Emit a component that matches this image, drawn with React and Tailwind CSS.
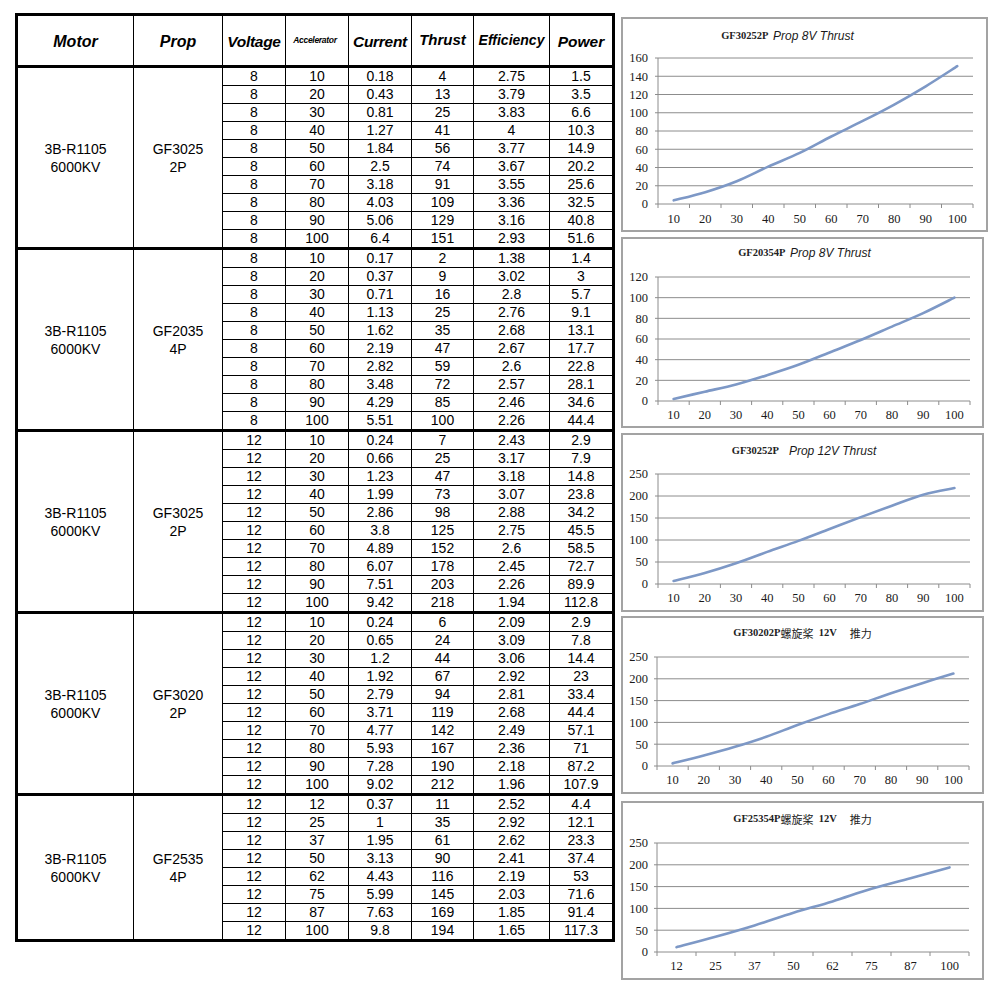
import React from "react";

const groups = [
  {
    motor: ["3B-R1105", "6000KV"],
    prop: ["GF3025", "2P"],
    rows: [
      ["8", "10", "0.18", "4", "2.75", "1.5"],
      ["8", "20", "0.43", "13", "3.79", "3.5"],
      ["8", "30", "0.81", "25", "3.83", "6.6"],
      ["8", "40", "1.27", "41", "4", "10.3"],
      ["8", "50", "1.84", "56", "3.77", "14.9"],
      ["8", "60", "2.5", "74", "3.67", "20.2"],
      ["8", "70", "3.18", "91", "3.55", "25.6"],
      ["8", "80", "4.03", "109", "3.36", "32.5"],
      ["8", "90", "5.06", "129", "3.16", "40.8"],
      ["8", "100", "6.4", "151", "2.93", "51.6"],
    ],
  },
  {
    motor: ["3B-R1105", "6000KV"],
    prop: ["GF2035", "4P"],
    rows: [
      ["8", "10", "0.17", "2", "1.38", "1.4"],
      ["8", "20", "0.37", "9", "3.02", "3"],
      ["8", "30", "0.71", "16", "2.8", "5.7"],
      ["8", "40", "1.13", "25", "2.76", "9.1"],
      ["8", "50", "1.62", "35", "2.68", "13.1"],
      ["8", "60", "2.19", "47", "2.67", "17.7"],
      ["8", "70", "2.82", "59", "2.6", "22.8"],
      ["8", "80", "3.48", "72", "2.57", "28.1"],
      ["8", "90", "4.29", "85", "2.46", "34.6"],
      ["8", "100", "5.51", "100", "2.26", "44.4"],
    ],
  },
  {
    motor: ["3B-R1105", "6000KV"],
    prop: ["GF3025", "2P"],
    rows: [
      ["12", "10", "0.24", "7", "2.43", "2.9"],
      ["12", "20", "0.66", "25", "3.17", "7.9"],
      ["12", "30", "1.23", "47", "3.18", "14.8"],
      ["12", "40", "1.99", "73", "3.07", "23.8"],
      ["12", "50", "2.86", "98", "2.88", "34.2"],
      ["12", "60", "3.8", "125", "2.75", "45.5"],
      ["12", "70", "4.89", "152", "2.6", "58.5"],
      ["12", "80", "6.07", "178", "2.45", "72.7"],
      ["12", "90", "7.51", "203", "2.26", "89.9"],
      ["12", "100", "9.42", "218", "1.94", "112.8"],
    ],
  },
  {
    motor: ["3B-R1105", "6000KV"],
    prop: ["GF3020", "2P"],
    rows: [
      ["12", "10", "0.24", "6", "2.09", "2.9"],
      ["12", "20", "0.65", "24", "3.09", "7.8"],
      ["12", "30", "1.2", "44", "3.06", "14.4"],
      ["12", "40", "1.92", "67", "2.92", "23"],
      ["12", "50", "2.79", "94", "2.81", "33.4"],
      ["12", "60", "3.71", "119", "2.68", "44.4"],
      ["12", "70", "4.77", "142", "2.49", "57.1"],
      ["12", "80", "5.93", "167", "2.36", "71"],
      ["12", "90", "7.28", "190", "2.18", "87.2"],
      ["12", "100", "9.02", "212", "1.96", "107.9"],
    ],
  },
  {
    motor: ["3B-R1105", "6000KV"],
    prop: ["GF2535", "4P"],
    rows: [
      ["12", "12", "0.37", "11", "2.52", "4.4"],
      ["12", "25", "1", "35", "2.92", "12.1"],
      ["12", "37", "1.95", "61", "2.62", "23.3"],
      ["12", "50", "3.13", "90", "2.41", "37.4"],
      ["12", "62", "4.43", "116", "2.19", "53"],
      ["12", "75", "5.99", "145", "2.03", "71.6"],
      ["12", "87", "7.63", "169", "1.85", "91.4"],
      ["12", "100", "9.8", "194", "1.65", "117.3"],
    ],
  },
];

const dataCols = [
  "w-[63px] border-r border-black",
  "w-[63px] border-r border-black",
  "w-[63px] border-r border-black",
  "w-[62px] border-r border-black",
  "w-[76px] border-r border-black",
  "w-[62px]",
];

function Table() {
  return (
    <div className="w-[600px] shrink-0 border-[3px] border-black font-['Liberation_Sans',Arial,sans-serif] text-black">
      <div className="flex h-[52px] border-b-[3px] border-black font-bold italic">
        <div className="w-[116px] border-r border-black flex items-center justify-center text-[16px] pt-[2px]">Motor</div>
        <div className="w-[89px] border-r border-black flex items-center justify-center text-[16px] pt-[2px]">Prop</div>
        <div className="w-[63px] border-r border-black flex items-center justify-center text-[15.5px] pt-[2px] tracking-[-0.3px]">Voltage</div>
        <div className="w-[63px] border-r border-black flex items-center justify-center text-[8.5px] pr-[4px] tracking-[-0.3px]">Accelerator</div>
        <div className="w-[63px] border-r border-black flex items-center justify-center text-[15.5px] pt-[2px] tracking-[-0.3px]">Current</div>
        <div className="w-[62px] border-r border-black flex items-center justify-center text-[15px]">Thrust</div>
        <div className="w-[76px] border-r border-black flex items-center justify-center text-[14px]">Efficiency</div>
        <div className="w-[62px] flex items-center justify-center text-[15.5px] pt-[2px]">Power</div>
      </div>
      {groups.map((g, gi) => (
        <div key={gi} className={gi > 0 ? "flex border-t-[3px] border-black" : "flex"}>
          <div className="w-[116px] shrink-0 border-r border-black flex flex-col items-center justify-center text-[14px] leading-[18px]">
            <span>{g.motor[0]}</span>
            <span>{g.motor[1]}</span>
          </div>
          <div className="w-[89px] shrink-0 border-r border-black flex flex-col items-center justify-center text-[14px] leading-[18px]">
            <span>{g.prop[0]}</span>
            <span>{g.prop[1]}</span>
          </div>
          <div className="flex flex-col flex-1">
            {g.rows.map((r, ri) => (
              <div key={ri} className={ri > 0 ? "flex border-t border-black" : "flex"}>
                {r.map((c, ci) => (
                  <div key={ci} className={`${dataCols[ci]} text-center text-[14px] leading-[17px]`}>
                    {c}
                  </div>
                ))}
              </div>
            ))}
          </div>
        </div>
      ))}
    </div>
  );
}

function smoothPath(pts) {
  let d = `M${pts[0][0].toFixed(2)},${pts[0][1].toFixed(2)}`;
  for (let i = 0; i < pts.length - 1; i++) {
    const p0 = pts[i - 1] || pts[i];
    const p1 = pts[i];
    const p2 = pts[i + 1];
    const p3 = pts[i + 2] || p2;
    const t = 1 / 6;
    const c1 = [p1[0] + (p2[0] - p0[0]) * t, p1[1] + (p2[1] - p0[1]) * t];
    const c2 = [p2[0] - (p3[0] - p1[0]) * t, p2[1] - (p3[1] - p1[1]) * t];
    d += ` C${c1[0].toFixed(2)},${c1[1].toFixed(2)} ${c2[0].toFixed(2)},${c2[1].toFixed(2)} ${p2[0].toFixed(2)},${p2[1].toFixed(2)}`;
  }
  return d;
}

const mono = "font-['Liberation_Serif','Times_New_Roman',serif] font-bold text-[10.5px] text-[#222]";
const ital = "font-['Liberation_Sans',Arial,sans-serif] italic text-[12px] text-[#1a1a1a]";
const cjk = "font-['Noto_Sans_CJK_SC',sans-serif] text-[11px] text-[#222]";

const charts = [
  {
    top: 17, w: 367, h: 215, titleH: 34, titleCls: "pr-[34px]",
    title: [[mono, "GF30252P  "], [ital, "Prop 8V Thrust"]],
    x0: 658, x1: 973, yTop: 58, yBot: 204, max: 160, step: 20, xLabelY: 219,
    data: [4, 13, 25, 41, 56, 74, 91, 109, 129, 151],
    xl: ["10", "20", "30", "40", "50", "60", "70", "80", "90", "100"],
  },
  {
    top: 237, w: 363, h: 191, titleH: 28, titleCls: "pl-[4px]",
    title: [[mono, "GF20354P  "], [ital, "Prop 8V Thrust"]],
    x0: 658, x1: 970, yTop: 277, yBot: 401, max: 120, step: 20, xLabelY: 415,
    data: [2, 9, 16, 25, 35, 47, 59, 72, 85, 100],
    xl: ["10", "20", "30", "40", "50", "60", "70", "80", "90", "100"],
  },
  {
    top: 433, w: 363, h: 179, titleH: 32, titleCls: "pl-[3px]",
    title: [[mono, "GF30252P    "], [ital, "Prop 12V Thrust"]],
    x0: 658, x1: 970, yTop: 474, yBot: 584, max: 250, step: 50, xLabelY: 598,
    data: [7, 25, 47, 73, 98, 125, 152, 178, 203, 218],
    xl: ["10", "20", "30", "40", "50", "60", "70", "80", "90", "100"],
  },
  {
    top: 616, w: 363, h: 178, titleH: 30, titleCls: "",
    title: [[mono, "GF30202P"], [cjk, "螺旋桨"], [mono, "  12V     "], [cjk, "推力"]],
    x0: 657, x1: 969, yTop: 657, yBot: 766, max: 250, step: 50, xLabelY: 780,
    data: [6, 24, 44, 67, 94, 119, 142, 167, 190, 212],
    xl: ["10", "20", "30", "40", "50", "60", "70", "80", "90", "100"],
  },
  {
    top: 801, w: 363, h: 179, titleH: 32, titleCls: "",
    title: [[mono, "GF25354P"], [cjk, "螺旋桨"], [mono, "  12V     "], [cjk, "推力"]],
    x0: 657, x1: 969, yTop: 843, yBot: 952, max: 250, step: 50, xLabelY: 966,
    data: [11, 35, 61, 90, 116, 145, 169, 194],
    xl: ["12", "25", "37", "50", "62", "75", "87", "100"],
  },
];

const marginCls = ["mt-[4px]", "mt-[5px]", "mt-[5px]", "mt-[4px]", "mt-[7px]"];
const widthCls = { 367: "w-[367px]", 363: "w-[363px]" };
const heightCls = { 215: "h-[215px]", 191: "h-[191px]", 179: "h-[179px]", 178: "h-[178px]" };
const titleHCls = { 34: "h-[34px]", 28: "h-[28px]", 32: "h-[32px]", 30: "h-[30px]" };

function Chart({ c, i }) {
  const ox = 623;
  const oy = c.top + 2 + c.titleH;
  const svgW = c.w - 4;
  const svgH = c.h - 4 - c.titleH;
  const X = (px) => px - ox;
  const Y = (py) => py - oy;
  const n = c.data.length;
  const cw = (c.x1 - c.x0) / n;
  const yv = (v) => c.yBot - (v / c.max) * (c.yBot - c.yTop);
  const ticks = [];
  for (let v = 0; v <= c.max; v += c.step) ticks.push(v);
  const pts = c.data.map((v, k) => [X(c.x0 + cw * (k + 0.5)), Y(yv(v))]);
  const serif = "'Liberation Serif', 'Times New Roman', serif";
  return (
    <div className={`${marginCls[i]} ${widthCls[c.w]} ${heightCls[c.h]} border-2 border-[#a3a3a3] bg-white flex flex-col`}>
      <div className={`${titleHCls[c.titleH]} ${c.titleCls} flex items-center justify-center whitespace-pre text-black`}>
        {c.title.map(([cls, t], k) => (
          <span key={k} className={cls}>{t}</span>
        ))}
      </div>
      <svg width={svgW} height={svgH} viewBox={`0 0 ${svgW} ${svgH}`} className="block overflow-visible">
        {ticks.map((v) => (
          <line key={v} x1={X(c.x0) - 3} x2={X(c.x1)} y1={Y(yv(v))} y2={Y(yv(v))} stroke="#8c8c8c" strokeWidth="1" />
        ))}
        <line x1={X(c.x0)} x2={X(c.x0)} y1={Y(c.yTop)} y2={Y(c.yBot)} stroke="#8c8c8c" strokeWidth="1" />
        {Array.from({ length: n + 1 }).map((_, k) => (
          <line key={k} x1={X(c.x0 + cw * k)} x2={X(c.x0 + cw * k)} y1={Y(c.yBot)} y2={Y(c.yBot) + 4} stroke="#8c8c8c" strokeWidth="1" />
        ))}
        {ticks.map((v) => (
          <text key={v} x={X(648)} y={Y(yv(v)) + 4.3} textAnchor="end" fontFamily={serif} fontSize="12.5" fill="#1a1a1a">
            {v}
          </text>
        ))}
        {c.xl.map((t, k) => (
          <text key={k} x={X(c.x0 + cw * (k + 0.5))} y={Y(c.xLabelY) + 4.3} textAnchor="middle" fontFamily={serif} fontSize="12.5" fill="#1a1a1a">
            {t}
          </text>
        ))}
        <path d={smoothPath(pts)} fill="none" stroke="#7d98c6" strokeWidth="2.6" strokeLinecap="round" strokeLinejoin="round" />
      </svg>
    </div>
  );
}

export default function App() {
  return (
    <div className="w-[1000px] h-[1002px] bg-white flex items-start pt-[13px] pl-[15px]">
      <Table />
      <div className="ml-[6px] flex flex-col">
        {charts.map((c, i) => (
          <Chart key={i} c={c} i={i} />
        ))}
      </div>
    </div>
  );
}
